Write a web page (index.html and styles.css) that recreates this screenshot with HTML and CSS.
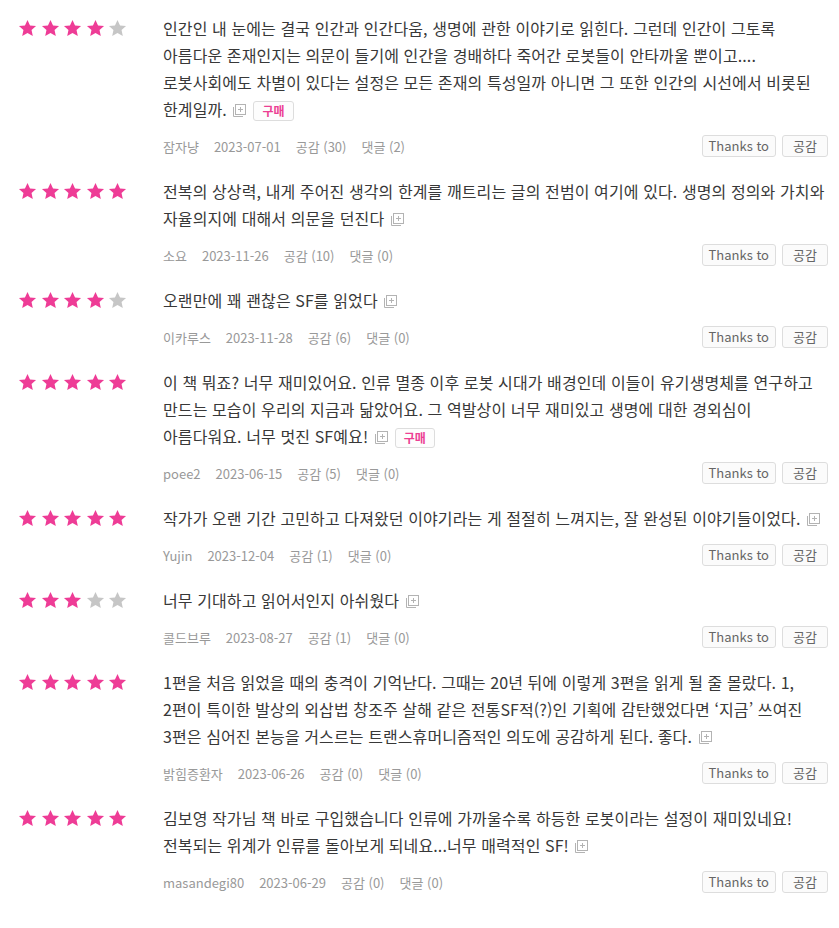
FILE: index.html
```html
<!DOCTYPE html>
<html lang="ko">
<head>
<meta charset="utf-8">
<title>리뷰</title>
<link rel="stylesheet" href="styles.css">
</head>
<body>
<svg class="defs" width="0" height="0" aria-hidden="true">
  <defs>
    <symbol id="star" viewBox="0 0 24 24">
      <polygon points="12,1.2 15.2,8.1 22.8,8.9 17.1,14 18.7,21.6 12,17.7 5.3,21.6 6.9,14 1.2,8.9 8.8,8.1"/>
    </symbol>
    <symbol id="more" viewBox="0 0 14 14">
      <rect x="3.5" y="0.5" width="10" height="10" fill="none" stroke="currentColor"/>
      <path d="M8.5 3V8M6 5.5H11" stroke="currentColor" fill="none"/>
      <path d="M1.5 3V12.5H11" stroke="currentColor" fill="none"/>
    </symbol>
  </defs>
</svg>

<div class="list">

  <div class="review">
    <div class="stars">
      <svg class="star on"><use href="#star"/></svg><svg class="star on"><use href="#star"/></svg><svg class="star on"><use href="#star"/></svg><svg class="star on"><use href="#star"/></svg><svg class="star off"><use href="#star"/></svg>
    </div>
    <div class="body">
      <p class="text">인간인 내 눈에는 결국 인간과 인간다움, 생명에 관한 이야기로 읽힌다. 그런데 인간이 그토록<br>아름다운 존재인지는 의문이 들기에 인간을 경배하다 죽어간 로봇들이 안타까울 뿐이고....<br>로봇사회에도 차별이 있다는 설정은 모든 존재의 특성일까 아니면 그 또한 인간의 시선에서 비롯된<br>한계일까. <svg class="more"><use href="#more"/></svg><span class="badge">구매</span></p>
      <div class="meta">
        <div class="info"><span>잠자냥</span><span>2023-07-01</span><span>공감 (30)</span><span>댓글 (2)</span></div>
        <div class="actions"><button class="btn thanks">Thanks to</button><button class="btn like">공감</button></div>
      </div>
    </div>
  </div>

  <div class="review">
    <div class="stars">
      <svg class="star on"><use href="#star"/></svg><svg class="star on"><use href="#star"/></svg><svg class="star on"><use href="#star"/></svg><svg class="star on"><use href="#star"/></svg><svg class="star on"><use href="#star"/></svg>
    </div>
    <div class="body">
      <p class="text">전복의 상상력, 내게 주어진 생각의 한계를 깨트리는 글의 전범이 여기에 있다. 생명의 정의와 가치와<br>자율의지에 대해서 의문을 던진다 <svg class="more"><use href="#more"/></svg></p>
      <div class="meta">
        <div class="info"><span>소요</span><span>2023-11-26</span><span>공감 (10)</span><span>댓글 (0)</span></div>
        <div class="actions"><button class="btn thanks">Thanks to</button><button class="btn like">공감</button></div>
      </div>
    </div>
  </div>

  <div class="review">
    <div class="stars">
      <svg class="star on"><use href="#star"/></svg><svg class="star on"><use href="#star"/></svg><svg class="star on"><use href="#star"/></svg><svg class="star on"><use href="#star"/></svg><svg class="star off"><use href="#star"/></svg>
    </div>
    <div class="body">
      <p class="text">오랜만에 꽤 괜찮은 SF를 읽었다 <svg class="more"><use href="#more"/></svg></p>
      <div class="meta">
        <div class="info"><span>이카루스</span><span>2023-11-28</span><span>공감 (6)</span><span>댓글 (0)</span></div>
        <div class="actions"><button class="btn thanks">Thanks to</button><button class="btn like">공감</button></div>
      </div>
    </div>
  </div>

  <div class="review">
    <div class="stars">
      <svg class="star on"><use href="#star"/></svg><svg class="star on"><use href="#star"/></svg><svg class="star on"><use href="#star"/></svg><svg class="star on"><use href="#star"/></svg><svg class="star on"><use href="#star"/></svg>
    </div>
    <div class="body">
      <p class="text">이 책 뭐죠? 너무 재미있어요. 인류 멸종 이후 로봇 시대가 배경인데 이들이 유기생명체를 연구하고<br>만드는 모습이 우리의 지금과 닮았어요. 그 역발상이 너무 재미있고 생명에 대한 경외심이<br>아름다워요. 너무 멋진 SF예요! <svg class="more"><use href="#more"/></svg><span class="badge">구매</span></p>
      <div class="meta">
        <div class="info"><span>poee2</span><span>2023-06-15</span><span>공감 (5)</span><span>댓글 (0)</span></div>
        <div class="actions"><button class="btn thanks">Thanks to</button><button class="btn like">공감</button></div>
      </div>
    </div>
  </div>

  <div class="review">
    <div class="stars">
      <svg class="star on"><use href="#star"/></svg><svg class="star on"><use href="#star"/></svg><svg class="star on"><use href="#star"/></svg><svg class="star on"><use href="#star"/></svg><svg class="star on"><use href="#star"/></svg>
    </div>
    <div class="body">
      <p class="text">작가가 오랜 기간 고민하고 다져왔던 이야기라는 게 절절히 느껴지는, 잘 완성된 이야기들이었다. <svg class="more"><use href="#more"/></svg></p>
      <div class="meta">
        <div class="info"><span>Yujin</span><span>2023-12-04</span><span>공감 (1)</span><span>댓글 (0)</span></div>
        <div class="actions"><button class="btn thanks">Thanks to</button><button class="btn like">공감</button></div>
      </div>
    </div>
  </div>

  <div class="review">
    <div class="stars">
      <svg class="star on"><use href="#star"/></svg><svg class="star on"><use href="#star"/></svg><svg class="star on"><use href="#star"/></svg><svg class="star off"><use href="#star"/></svg><svg class="star off"><use href="#star"/></svg>
    </div>
    <div class="body">
      <p class="text">너무 기대하고 읽어서인지 아쉬웠다 <svg class="more"><use href="#more"/></svg></p>
      <div class="meta">
        <div class="info"><span>콜드브루</span><span>2023-08-27</span><span>공감 (1)</span><span>댓글 (0)</span></div>
        <div class="actions"><button class="btn thanks">Thanks to</button><button class="btn like">공감</button></div>
      </div>
    </div>
  </div>

  <div class="review">
    <div class="stars">
      <svg class="star on"><use href="#star"/></svg><svg class="star on"><use href="#star"/></svg><svg class="star on"><use href="#star"/></svg><svg class="star on"><use href="#star"/></svg><svg class="star on"><use href="#star"/></svg>
    </div>
    <div class="body">
      <p class="text">1편을 처음 읽었을 때의 충격이 기억난다. 그때는 20년 뒤에 이렇게 3편을 읽게 될 줄 몰랐다. 1,<br>2편이 특이한 발상의 외삽법 창조주 살해 같은 전통SF적(?)인 기획에 감탄했었다면 ‘지금’ 쓰여진<br>3편은 심어진 본능을 거스르는 트랜스휴머니즘적인 의도에 공감하게 된다. 좋다. <svg class="more"><use href="#more"/></svg></p>
      <div class="meta">
        <div class="info"><span>밝힘증환자</span><span>2023-06-26</span><span>공감 (0)</span><span>댓글 (0)</span></div>
        <div class="actions"><button class="btn thanks">Thanks to</button><button class="btn like">공감</button></div>
      </div>
    </div>
  </div>

  <div class="review">
    <div class="stars">
      <svg class="star on"><use href="#star"/></svg><svg class="star on"><use href="#star"/></svg><svg class="star on"><use href="#star"/></svg><svg class="star on"><use href="#star"/></svg><svg class="star on"><use href="#star"/></svg>
    </div>
    <div class="body">
      <p class="text">김보영 작가님 책 바로 구입했습니다 인류에 가까울수록 하등한 로봇이라는 설정이 재미있네요!<br>전복되는 위계가 인류를 돌아보게 되네요...너무 매력적인 SF! <svg class="more"><use href="#more"/></svg></p>
      <div class="meta">
        <div class="info"><span>masandegi80</span><span>2023-06-29</span><span>공감 (0)</span><span>댓글 (0)</span></div>
        <div class="actions"><button class="btn thanks">Thanks to</button><button class="btn like">공감</button></div>
      </div>
    </div>
  </div>

</div>
</body>
</html>
```

FILE: styles.css
```css
html, body {
  margin: 0;
  padding: 0;
  background: #ffffff;
}

body {
  font-family: "Noto Sans CJK KR", "Noto Sans", sans-serif;
  color: #333333;
}

.defs {
  position: absolute;
  width: 0;
  height: 0;
  overflow: hidden;
}

.list {
  display: flex;
  flex-direction: column;
  gap: 21px;
  padding: 15px 11px 20px 18px;
}

.review {
  display: grid;
  grid-template-columns: 145px 1fr;
}

.stars {
  display: flex;
  gap: 3.5px;
  padding-top: 4px;
  align-items: flex-start;
}

.star {
  width: 19px;
  height: 19px;
  display: block;
}

.star.on { fill: #ee3c96; }
.star.off { fill: #c6c6c6; }

.body {
  display: flex;
  flex-direction: column;
  gap: 12px;
  min-width: 0;
}

.text {
  margin: 0;
  font-size: 16px;
  line-height: 27px;
  letter-spacing: 0.1px;
  color: #383838;
  white-space: nowrap;
}

.more {
  width: 14px;
  height: 14px;
  color: #b3b3b3;
  vertical-align: -2px;
  margin-left: 1px;
}

.badge {
  display: inline-block;
  box-sizing: border-box;
  margin-left: 7px;
  padding: 0 8px;
  height: 20px;
  line-height: 18px;
  border: 1px solid #dddddd;
  border-radius: 3px;
  background: #fdfdfd;
  color: #ec3f93;
  font-size: 12px;
  font-weight: 700;
  letter-spacing: 0;
  vertical-align: 0;
}

.meta {
  display: flex;
  align-items: center;
  justify-content: space-between;
  height: 22px;
}

.info {
  display: flex;
  gap: 15px;
  font-size: 13px;
  color: #999999;
}

.actions {
  display: flex;
  gap: 6px;
}

.btn {
  box-sizing: border-box;
  height: 22px;
  padding: 0 6px;
  border: 1px solid #dddddd;
  border-radius: 3px;
  background: #fbfbfb;
  color: #666666;
  font-family: "Noto Sans CJK KR", "Noto Sans", sans-serif;
  font-size: 13px;
  line-height: 20px;
  text-align: center;
  cursor: pointer;
}

.btn.thanks { min-width: 71px; }
.btn.like { min-width: 46px; }
```
